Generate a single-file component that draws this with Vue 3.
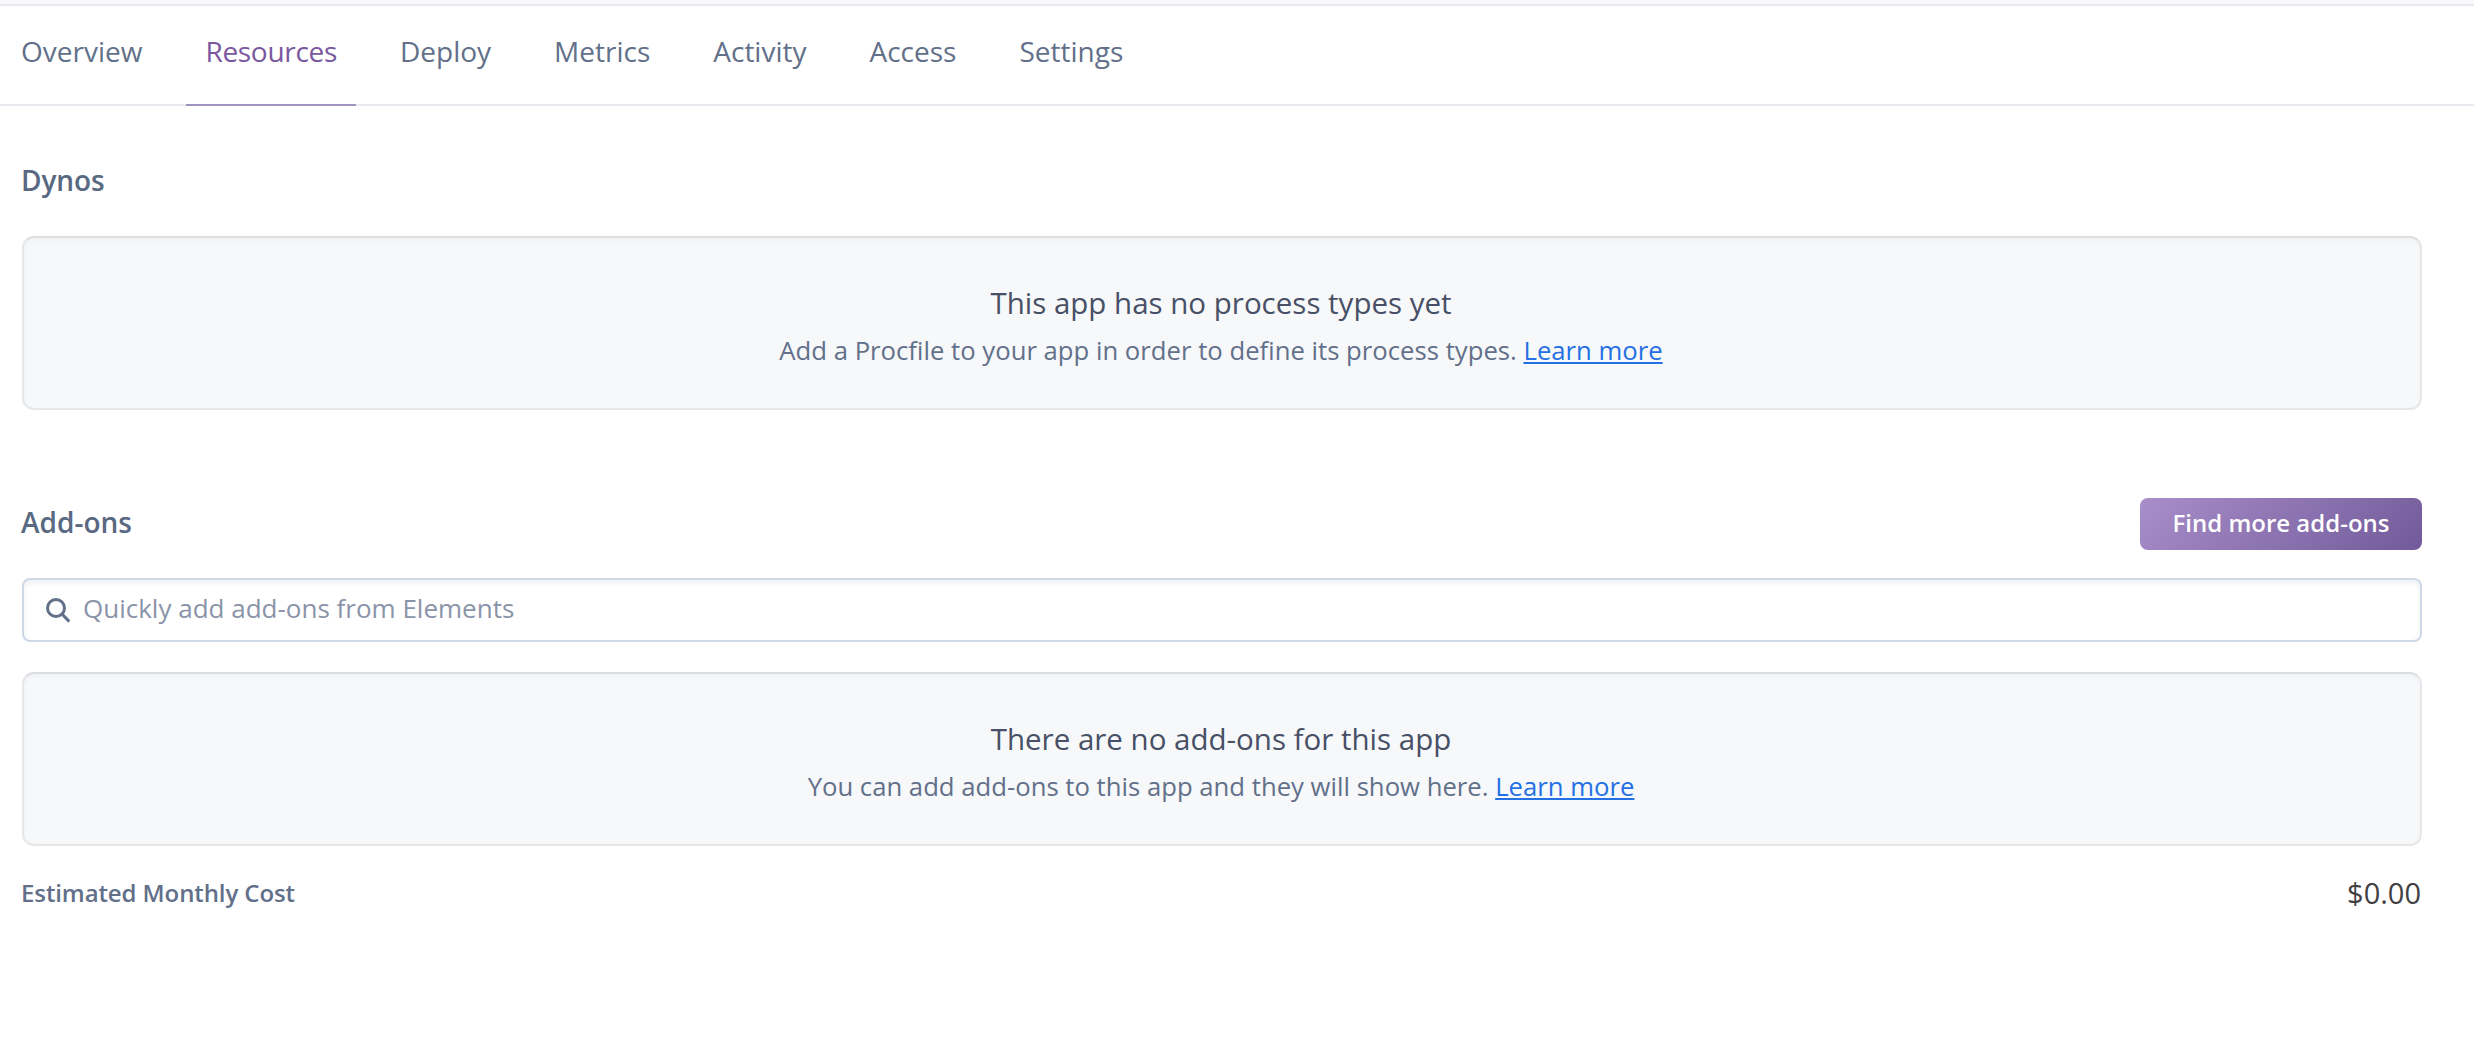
<script setup>
const tabs = ['Overview', 'Resources', 'Deploy', 'Metrics', 'Activity', 'Access', 'Settings']
const active = 'Resources'
</script>

<template>
  <div class="page">
    <nav class="tabs">
      <a v-for="tab in tabs" :key="tab" class="tab" :class="{ active: tab === active }">{{ tab }}</a>
    </nav>
    <main class="content">
      <h2 class="heading dynos">Dynos</h2>
      <section class="empty">
        <h3>This app has no process types yet</h3>
        <p>Add a Procfile to your app in order to define its process types. <a class="link">Learn more</a></p>
      </section>

      <div class="addons-head">
        <h2 class="heading">Add-ons</h2>
        <button class="button">Find more add-ons</button>
      </div>
      <div class="search">
        <svg class="icon" viewBox="0 0 26 26" fill="none" stroke="#62708a" stroke-width="3">
          <circle cx="11" cy="11" r="8.5" />
          <path d="M17 17 23.4 23.6" stroke-linecap="round" />
        </svg>
        <span>Quickly add add-ons from Elements</span>
      </div>
      <section class="empty addons">
        <h3>There are no add-ons for this app</h3>
        <p>You can add add-ons to this app and they will show here. <a class="link">Learn more</a></p>
      </section>

      <div class="cost">
        <span class="cost-label">Estimated Monthly Cost</span>
        <span class="cost-value">$0.00</span>
      </div>
    </main>
  </div>
</template>

<style>
body {
  margin: 0;
  background: #fff;
}
</style>

<style scoped>
.page {
  box-sizing: border-box;
  min-height: 1054px;
  border-top: 4px solid #f7f8fb;
  font-family: "Open Sans", "Noto Sans", sans-serif;
  color: #62708a;
}
h2, h3, p {
  margin: 0;
}
.tabs {
  display: flex;
  gap: 25px;
  height: 98px;
  padding-left: 2px;
  border-top: 2px solid #e8e9f1;
  border-bottom: 2px solid #e7ebf0;
}
.tab {
  box-sizing: border-box;
  height: 100px;
  padding: 0 19px;
  font-size: 28px;
  line-height: 91px;
}
.tab.active {
  color: #79589f;
  letter-spacing: -0.3px;
  border-bottom: 2px solid #a193bf;
}
.content {
  padding: 54px 52px 0 22px;
}
.heading {
  margin-left: -1px;
  font-size: 28px;
  line-height: 48px;
  font-weight: 600;
  color: #596981;
}
.dynos {
  height: 38px;
  line-height: 40px;
  letter-spacing: -0.1px;
}
.empty {
  box-sizing: border-box;
  height: 174px;
  margin-top: 38px;
  padding: 45px 2px 0 0;
  border: 2px solid #e5e7e9;
  border-top-color: #dcdee1;
  border-radius: 12px;
  background: #f7f8fa;
  box-shadow: inset 0 2px 4px rgba(0, 0, 0, 0.03);
  text-align: center;
}
.empty h3 {
  font-size: 29.5px;
  font-weight: 400;
  line-height: 40px;
  color: #475066;
}
.empty p {
  margin-top: 8px;
  font-size: 25.7px;
  line-height: 40px;
}
.link {
  color: #2470e4;
  text-decoration: underline 2px;
  text-underline-offset: 2px;
  text-decoration-skip-ink: none;
}
.addons-head {
  display: flex;
  justify-content: space-between;
  align-items: flex-start;
  height: 52px;
  margin-top: 88px;
}
.button {
  width: 282px;
  height: 52px;
  padding: 0 0 3px;
  border: 0;
  border-radius: 8px;
  background: linear-gradient(135deg, #a88fca, #725999);
  color: #fff;
  font: 600 24px/49px "Open Sans", "Noto Sans", sans-serif;
}
.search {
  box-sizing: border-box;
  display: flex;
  gap: 13px;
  height: 64px;
  margin-top: 28px;
  padding-left: 21px;
  border: 2px solid #cfd8e6;
  border-radius: 8px;
  box-shadow: inset 0 3px 5px rgba(50, 70, 130, 0.08);
  font-size: 26px;
  line-height: 57px;
  color: #8a94a9;
}
.icon {
  width: 26px;
  height: 26px;
  margin: 17px -1px 0 0;
}
.empty.addons {
  margin-top: 30px;
}
.cost {
  display: flex;
  justify-content: space-between;
  align-items: flex-start;
  margin-top: 24px;
}
.cost-label {
  margin-left: -1px;
  font-size: 24px;
  font-weight: 600;
  line-height: 46px;
  letter-spacing: -0.1px;
}
.cost-value {
  margin-right: 1px;
  font-size: 29px;
  line-height: 46px;
  color: #3f3f44;
}
</style>
